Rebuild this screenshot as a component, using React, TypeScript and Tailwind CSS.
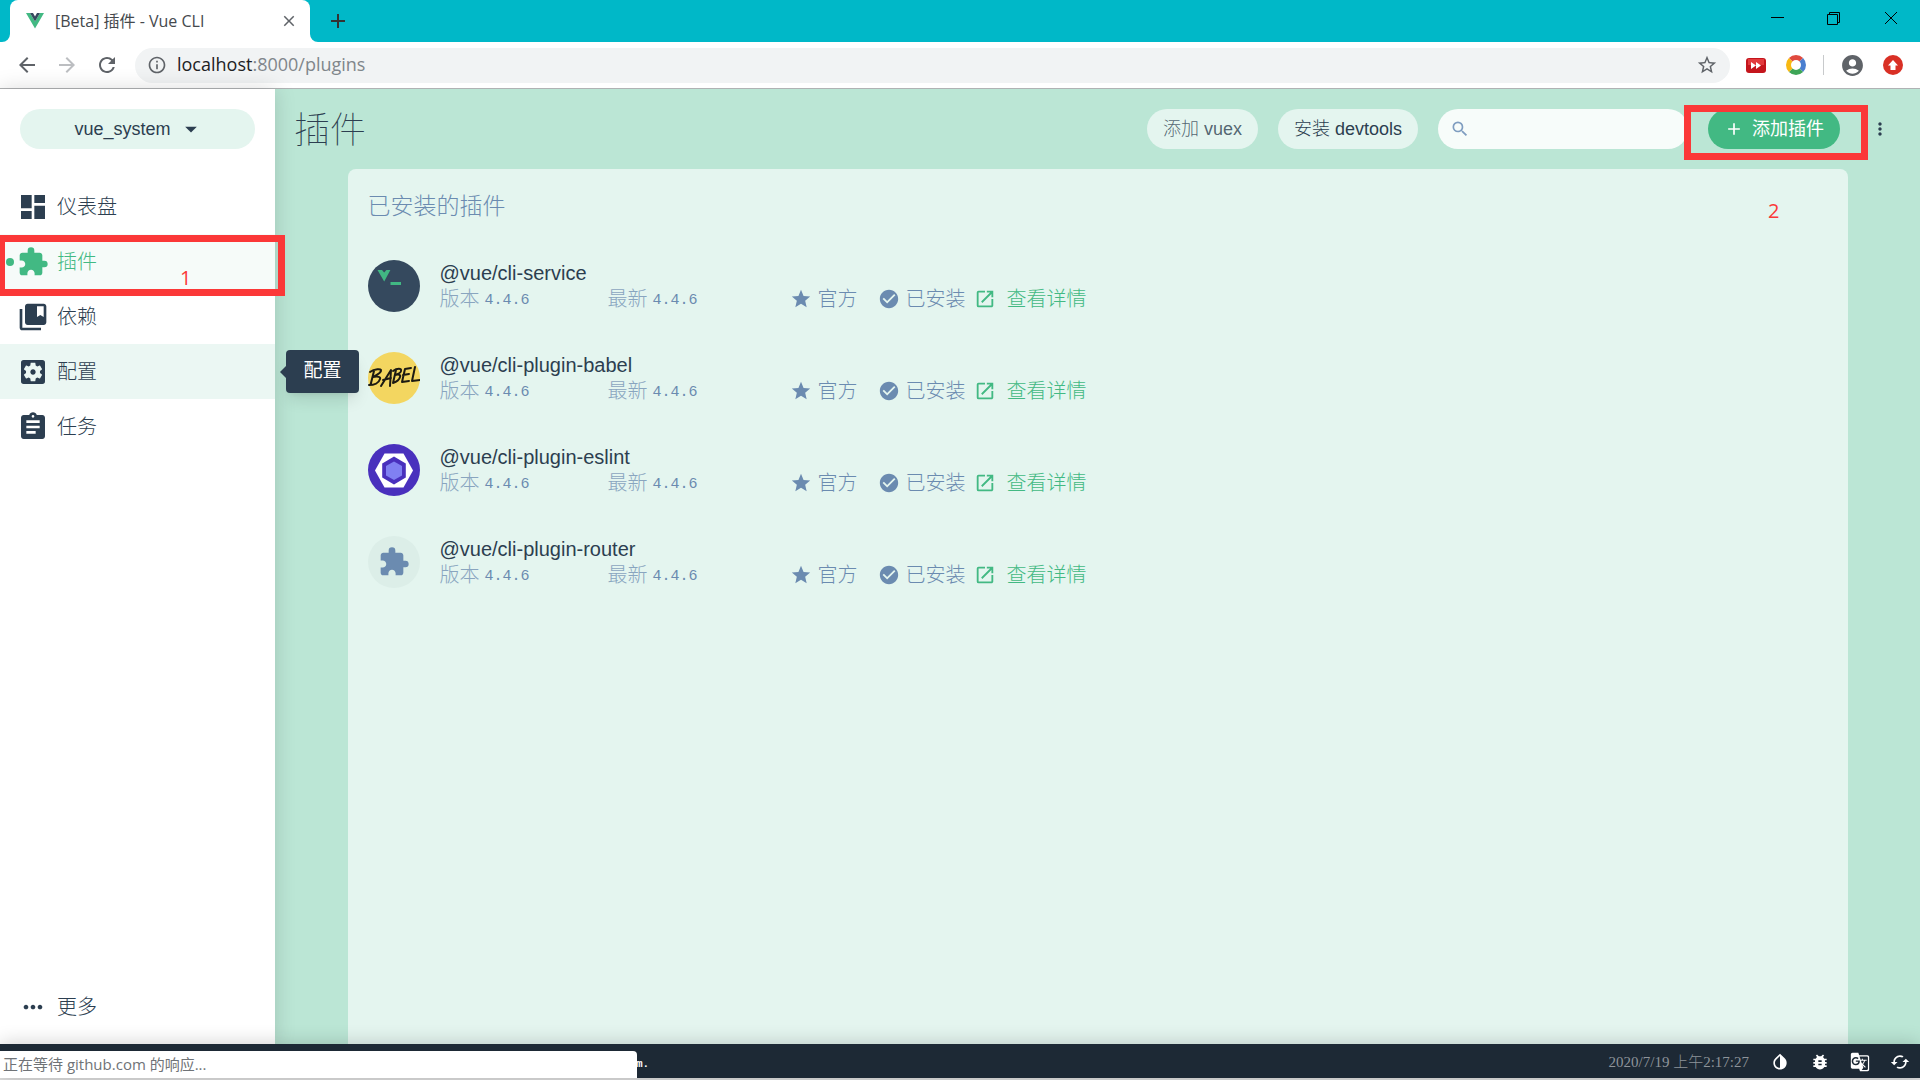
import React from "react";
import clsx from "clsx";
import {
  MdAccountCircle,
  MdAdd,
  MdArrowBack,
  MdArrowDropDown,
  MdArrowForward,
  MdAssignment,
  MdBugReport,
  MdCached,
  MdCheckCircle,
  MdClose,
  MdCollectionsBookmark,
  MdDashboard,
  MdExtension,
  MdGTranslate,
  MdInfoOutline,
  MdInvertColors,
  MdMoreHoriz,
  MdMoreVert,
  MdOpenInNew,
  MdRefresh,
  MdSearch,
  MdSettingsApplications,
  MdStar,
  MdStarBorder,
} from "react-icons/md";

const NAV = [
  { label: "仪表盘", icon: MdDashboard },
  { label: "插件", icon: MdExtension, active: true },
  { label: "依赖", icon: MdCollectionsBookmark },
  { label: "配置", icon: MdSettingsApplications, hovered: true },
  { label: "任务", icon: MdAssignment },
];

const PLUGINS = [
  { name: "@vue/cli-service", logo: <CliLogo /> },
  { name: "@vue/cli-plugin-babel", logo: <BabelLogo /> },
  { name: "@vue/cli-plugin-eslint", logo: <EslintLogo /> },
  { name: "@vue/cli-plugin-router", logo: <DefaultLogo /> },
];

const VERSION = "4.4.6";

function VueMark() {
  return (
    <svg viewBox="0 0 18 16" className="h-4 w-[18px] shrink-0">
      <path d="M0 0h4l5 8.5L14 0h4L9 15.6z" fill="#42b983" />
      <path d="M4 0h3l2 3.6L11 0h3L9 8.6z" fill="#35495e" />
    </svg>
  );
}

function CliLogo() {
  return (
    <svg viewBox="0 0 52 52" className="size-[52px]">
      <circle cx="26" cy="26" r="26" fill="#35495e" />
      <path d="M9.500 10h4.500l2.200 2.600L18.400 10h4L16.200 21.500z" fill="#41b883" />
      <path d="M22.500 22h10.500v3H22.500z" fill="#41b883" />
    </svg>
  );
}

function BabelLogo() {
  return (
    <svg viewBox="0 0 52 52" className="size-[52px]">
      <circle cx="26" cy="26" r="26" fill="#f3d660" />
      <g fill="none" stroke="#1c1a12" strokeWidth="2" strokeLinejoin="round" strokeLinecap="round">
        <path d="M6 19 2.500 33M2 20c4-3 12-4 11-1-1 3-5 4-8 6 5-1 8 0 7 2-1 4-6 6-11 6" />
        <path d="M13 34 23 18l-1 16M15 28l8-2" />
        <path d="M28 18 25 31M25 19c4-3 9-3 8 0 0 2-3 3-6 4 4-1 6 0 5 2-1 4-4 5-7 6" />
        <path d="M43 16l-6 1-3 13 7-1M35 23l6-1" />
        <path d="M47 15 44 29l8-1" />
      </g>
    </svg>
  );
}

function EslintLogo() {
  return (
    <svg viewBox="0 0 52 52" className="size-[52px]">
      <circle cx="26" cy="26" r="26" fill="#4930bd" />
      <path d="M16.500 9.500h19L45 26.500l-9.500 17h-19L7 26.500z" fill="#fff" />
      <path d="M26 12.500 37.800 19.500v14L26 40.500 14.200 33.500v-14z" fill="#4930bd" />
      <path d="M26 17.500 34 22v9.500L26 36l-8-4.500V22z" fill="#8080f2" />
    </svg>
  );
}

function DefaultLogo() {
  return (
    <div className="flex size-[52px] items-center justify-center rounded-full bg-[#dceee8]">
      <MdExtension className="size-8 text-[#6b8bb0]" />
    </div>
  );
}

function TabStrip() {
  return (
    <header className="flex h-[42px] items-stretch bg-[#00b8c8]">
      <div className="relative ml-[10px] flex w-[300px] items-center rounded-t-lg bg-white pr-3 pl-4">
        <svg viewBox="0 0 8 8" className="absolute bottom-0 -left-2 size-2">
          <path d="M8 0v8H0a8 8 0 0 0 8-8z" fill="#fff" />
        </svg>
        <svg viewBox="0 0 8 8" className="absolute -right-2 bottom-0 size-2">
          <path d="M0 0v8h8a8 8 0 0 1-8-8z" fill="#fff" />
        </svg>
        <VueMark />
        <span className="ml-[11px] flex-1 text-base text-[#45494d]">[Beta] 插件 - Vue CLI</span>
        <button type="button" aria-label="关闭标签页" className="text-[#5f6368]">
          <MdClose className="size-[18px]" />
        </button>
      </div>
      <button type="button" aria-label="新标签页" className="ml-4 text-[#333]">
        <MdAdd className="size-6" />
      </button>
      <div className="ml-auto flex items-start pt-[10px] text-black">
        <button type="button" aria-label="最小化" className="flex w-[57px] justify-center">
          <svg viewBox="0 0 16 16" className="size-4">
            <path d="M2 7.500h13" stroke="currentColor" />
          </svg>
        </button>
        <button type="button" aria-label="还原" className="flex w-[57px] justify-center">
          <svg viewBox="0 0 16 16" className="size-4">
            <path d="M1.500 4.500h10v10h-10zM3.500 4.500v-2h10v10h-2" fill="none" stroke="currentColor" />
          </svg>
        </button>
        <button type="button" aria-label="关闭" className="flex w-[58px] justify-center">
          <svg viewBox="0 0 16 16" className="size-4">
            <path d="M2 2l12 12M14 2 2 14" stroke="currentColor" />
          </svg>
        </button>
      </div>
    </header>
  );
}

function AddressBar() {
  return (
    <div className="flex h-[47px] items-center border-b border-[#b0b2b4] bg-white pr-[17px] pl-[15px] text-[#5f6368]">
      <button type="button" aria-label="后退"><MdArrowBack className="size-6" /></button>
      <button type="button" aria-label="前进" className="ml-4 text-[#bcbec1]"><MdArrowForward className="size-6" /></button>
      <button type="button" aria-label="刷新" className="ml-4"><MdRefresh className="size-6" /></button>
      <div className="mx-4 flex h-[35px] flex-1 items-center rounded-full bg-[#f1f3f4] px-3">
        <MdInfoOutline className="size-5 shrink-0" />
        <a href="#url" className="ml-[10px] flex-1 pb-[2px] text-lg text-[#80868b]">
          <span className="text-[#202124]">localhost</span>:8000/plugins
        </a>
        <button type="button" aria-label="收藏"><MdStarBorder className="size-[22px]" /></button>
      </div>
      <svg viewBox="0 0 20 15" className="h-[15px] w-5">
        <rect width="20" height="15" rx="3" fill="#c4151c" />
        <path d="M2 1h16v6H2z" fill="#e23a3d" />
        <path d="M5 4l5 3.500L5 11zM10 4l5 3.500-5 3.500z" fill="#fff" />
      </svg>
      <svg viewBox="0 0 20 20" className="ml-5 size-5">
        <g fill="none" strokeWidth="5">
          <path d="M4.700 4.700a7.500 7.500 0 0 1 10.600 0" stroke="#e04a3f" />
          <path d="M15.300 4.700a7.500 7.500 0 0 1 0 10.600" stroke="#4a7fd0" />
          <path d="M15.300 15.300a7.500 7.500 0 0 1-10.600 0" stroke="#3da557" />
          <path d="M4.700 15.300a7.500 7.500 0 0 1 0-10.600" stroke="#f8b912" />
        </g>
      </svg>
      <span className="ml-[17px] h-5 w-px bg-[#c8cacc]" />
      <MdAccountCircle className="ml-4 size-[25px]" />
      <svg viewBox="0 0 20 20" className="ml-[18px] size-5">
        <circle cx="10" cy="10" r="10" fill="#d93025" />
        <path d="M10 5l5 5.500h-2.500V15h-5v-4.500H5z" fill="#fff" />
      </svg>
    </div>
  );
}

function Sidebar() {
  return (
    <aside className="relative z-10 flex w-[275px] shrink-0 flex-col bg-white shadow-[0_0_20px_rgba(0,0,0,0.15)]">
      <button
        type="button"
        className="mx-5 mt-5 mb-[30px] flex h-10 items-center justify-center rounded-full bg-[#e4f5ef] pl-1 text-lg"
      >
        vue_system
        <MdArrowDropDown className="ml-[6px] size-7" />
      </button>
      <nav>
        {NAV.map(({ label, icon: Icon, active, hovered }) => (
          <a
            key={label}
            href="#nav"
            className={clsx(
              "relative flex h-[55px] items-center pl-[17px] text-xl font-light",
              active && "bg-[#f6fbf9] text-[#42b983]",
              hovered && "bg-[#ebf7f3]"
            )}
          >
            {active && <span className="absolute left-[6px] size-2 rounded-full bg-[#42b983]" />}
            <Icon className="size-8" />
            <span className="ml-2">{label}</span>
            {hovered && (
              <span className="absolute top-[6px] left-[286px] flex h-[43px] w-[73px] items-center justify-center rounded bg-[#2c3e50] text-[19px] font-normal whitespace-nowrap text-white shadow-lg">
                <svg viewBox="0 0 7 14" className="absolute -left-[6px] h-[14px] w-[7px]">
                  <path d="M7 0v14L0 7z" fill="#2c3e50" />
                </svg>
                {label}
              </span>
            )}
          </a>
        ))}
      </nav>
      <button type="button" className="mt-auto mb-[10px] flex h-[55px] items-center pl-[19px] text-xl font-light">
        <MdMoreHoriz className="size-7" />
        <span className="ml-[10px]">更多</span>
      </button>
      {/* step 1 */}
      <div className="pointer-events-none absolute top-[146px] -left-[2px] h-[61px] w-[287px] border-[7px] border-[#fb3838]" />
      <span className="pointer-events-none absolute top-[175px] left-[180px] font-['Open_Sans',sans-serif] text-xl text-[#fb3838]">1</span>
    </aside>
  );
}

function PluginRow({ name, logo }: { name: string; logo: React.ReactNode }) {
  return (
    <li className="flex h-[92px] items-center px-5">
      {logo}
      <div className="ml-5">
        <div className="text-xl leading-[26px]">{name}</div>
        <div className="flex h-[26px] items-center text-xl font-light text-[#6b8bb0]">
          <PluginVersion label="版本" />
          <PluginVersion label="最新" />
          <span className="ml-[14px] flex w-[88px] items-center gap-[6px]">
            <MdStar className="size-[22px]" />
            官方
          </span>
          <span className="flex items-center gap-[6px]">
            <MdCheckCircle className="size-[22px]" />
            已安装
          </span>
          <a href="#details" className="ml-2 flex items-center gap-[11px] text-[#42b983]">
            <MdOpenInNew className="size-[22px]" />
            查看详情
          </a>
        </div>
      </div>
    </li>
  );
}

function PluginVersion({ label }: { label: string }) {
  return (
    <span className="flex w-[168px] items-center gap-[5px]">
      <span className="opacity-75">{label}</span>
      <span className="pt-[2px] font-['Liberation_Mono',monospace] text-[15px] font-normal">{VERSION}</span>
    </span>
  );
}

function PluginsView() {
  return (
    <main className="flex min-w-0 flex-1 flex-col bg-[#bbe6d5]">
      <div className="relative flex h-20 shrink-0 items-center pr-[30px] pl-[19px]">
        <h1 className="flex-1 pt-1 text-4xl font-thin">插件</h1>
        <button type="button" className="h-10 rounded-full bg-[#e4f5ef] px-4 text-lg font-light text-[#2c3e50]/80">添加 vuex</button>
        <button type="button" className="ml-5 h-10 rounded-full bg-[#e4f5ef] px-4 text-lg font-light">安装 devtools</button>
        <label className="ml-5 flex h-10 w-[250px] items-center rounded-full bg-[#f7fcfa] pl-3">
          <MdSearch className="size-[22px] text-[#7f9dc0]" />
          <input type="text" aria-label="搜索" className="w-full min-w-0 bg-transparent px-2 text-lg outline-none" />
        </label>
        <button type="button" className="ml-5 flex h-10 w-[132px] items-center justify-center gap-2 rounded-full bg-[#42b983] text-lg text-white">
          <MdAdd className="size-5" />
          添加插件
        </button>
        <button type="button" aria-label="更多操作" className="ml-[30px]">
          <MdMoreVert className="size-5" />
        </button>
        {/* step 2 */}
        <div className="pointer-events-none absolute top-4 right-[52px] h-[55px] w-[184px] border-[7px] border-[#fb3838]" />
      </div>
      <section className="relative mx-auto w-full max-w-[1500px] flex-1 rounded-t-lg bg-[#e4f5ef]">
        <h2 className="px-5 pt-[21px] pb-[18px] text-[23px] leading-8 font-light text-[#6b8bb0]">已安装的插件</h2>
        <ul>
          {PLUGINS.map((plugin) => (
            <PluginRow key={plugin.name} {...plugin} />
          ))}
        </ul>
        <span className="pointer-events-none absolute top-7 right-[68px] font-['Open_Sans',sans-serif] text-xl text-[#fb3838]">2</span>
      </section>
    </main>
  );
}

function StatusBar() {
  return (
    <footer className="relative z-20 flex h-[34px] shrink-0 items-center justify-end bg-[#1d2935] pt-[2px] pr-[10px] text-white shadow-[0_0_20px_rgba(0,0,0,0.2)]">
      <span className="absolute top-3 left-[636px] font-['Liberation_Mono',monospace] text-[11px] leading-4 font-bold">m.</span>
      <time className="mr-[21px] font-['Liberation_Serif','Noto_Sans_CJK_SC',serif] text-[15px] font-light text-[#8e949a]">
        2020/7/19 上午2:17:27
      </time>
      <div className="flex gap-5">
        <MdInvertColors className="size-5" />
        <MdBugReport className="size-5" />
        <MdGTranslate className="size-5" />
        <MdCached className="size-5" />
      </div>
      <div className="absolute bottom-0 left-0 flex h-[27px] w-[637px] items-center rounded-tr bg-white pl-[3px] font-['Open_Sans','Noto_Sans_CJK_SC',sans-serif] text-[15px] text-[#6f7377]">
        正在等待 github.com 的响应...
      </div>
    </footer>
  );
}

export default function App() {
  return (
    <div className="flex h-screen flex-col overflow-hidden bg-white font-['Liberation_Sans','Noto_Sans_CJK_SC',sans-serif] text-[#2c3e50]">
      <div className="font-['Open_Sans','Noto_Sans_CJK_SC',sans-serif]">
        <TabStrip />
        <AddressBar />
      </div>
      <div className="flex min-h-0 flex-1">
        <Sidebar />
        <PluginsView />
      </div>
      <StatusBar />
      <div className="h-[2px] shrink-0 bg-[#dedede]" />
    </div>
  );
}
